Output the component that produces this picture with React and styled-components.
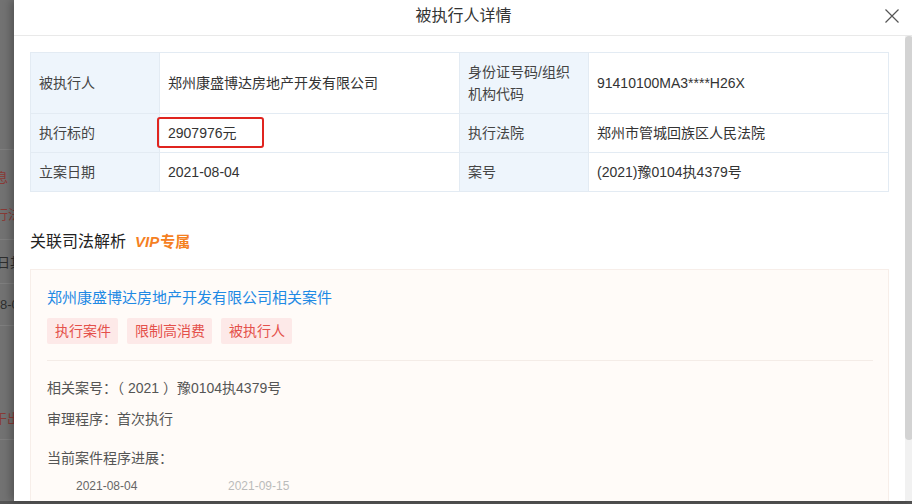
import React from 'react'
import styled, { createGlobalStyle } from 'styled-components'

const GlobalStyle = createGlobalStyle`
  html, body {
    margin: 0;
    padding: 0;
    background: #555;
    font-family: "Liberation Sans", "Noto Sans CJK SC", sans-serif;
  }
  * { box-sizing: border-box; }
`

const Page = styled.div`
  display: flex;
  align-items: flex-start;
  width: 912px;
  height: 504px;
  overflow: hidden;
  background: #555;
`

const Backdrop = styled.div`
  width: 14px;
  height: 501px;
  flex-shrink: 0;
  overflow: hidden;
  background: #727272;
  display: flex;
  flex-direction: column;
`

const BgRow = styled.div`
  height: ${p => p.h}px;
  flex-shrink: 0;
  display: flex;
  align-items: center;
  white-space: nowrap;
  font-size: 13px;
  border-bottom: ${p => (p.line ? '1px solid #7e7e7e' : 'none')};
  color: ${p => (p.red ? '#8a3a36' : '#2e2e2e')};
  span { margin-left: ${p => p.off || 0}px; }
`

const Modal = styled.div`
  flex: 1;
  height: 501px;
  background: #fff;
  display: flex;
  flex-direction: column;
  box-shadow: -3px 0 8px rgba(0, 0, 0, 0.28);
`

const Header = styled.div`
  height: 36px;
  flex-shrink: 0;
  border-bottom: 1px solid #e9e9e9;
  display: grid;
  grid-template-columns: 1fr auto 1fr;
  align-items: center;
`

const Title = styled.div`
  grid-column: 2;
  font-size: 16px;
  color: #333;
  line-height: 22px;
  margin-top: -4px;
`

const Close = styled.button`
  grid-column: 3;
  justify-self: end;
  margin-right: 14px;
  margin-top: -3px;
  width: 14px;
  height: 14px;
  padding: 0;
  border: none;
  background: none;
  display: flex;
`

const Body = styled.div`
  flex: 1;
  display: flex;
  overflow: hidden;
`

const Content = styled.div`
  flex: 1;
  padding: 16px 16px 0 16px;
  overflow: hidden;
`

const Rail = styled.div`
  width: 8px;
  flex-shrink: 0;
  background: #f1f1f1;
  display: flex;
  flex-direction: column;
`

const Thumb = styled.div`
  height: 404px;
  background: #d3d3d3;
  border-radius: 4px;
`

const InfoTable = styled.table`
  width: 100%;
  table-layout: fixed;
  border-collapse: collapse;
  font-size: 14px;
  line-height: 22px;
  color: #333;

  td {
    border: 1px solid #e3ebf3;
    padding: 8px 8px;
    vertical-align: middle;
  }
`

const Label = styled.td`
  background: #eef5fc;
  color: #444;
`

const Marked = styled.span`
  position: relative;
  display: inline-block;

  &::after {
    content: '';
    position: absolute;
    top: -5px;
    bottom: -4px;
    left: -11px;
    right: -27px;
    border: 2px solid #e0241f;
    border-radius: 3px;
  }
`

const SectionHead = styled.div`
  margin-top: 38px;
  display: flex;
  align-items: center;
  gap: 9px;
  line-height: 24px;
`

const SectionTitle = styled.span`
  font-size: 16px;
  color: #222;
`

const Vip = styled.span`
  font-size: 15px;
  font-weight: bold;
  color: #f5801f;
  i { font-style: italic; margin-right: 1px; }
`

const Card = styled.div`
  margin-top: 15px;
  background: #fffbf8;
  border: 1px solid #f7eee9;
  padding: 16px 15px 40px 16px;
`

const CardTitle = styled.a`
  display: block;
  font-size: 15px;
  line-height: 24px;
  color: #1f8ae4;
  text-decoration: none;
`

const Tags = styled.div`
  display: flex;
  gap: 9px;
  margin-top: 8px;
`

const Tag = styled.span`
  height: 26px;
  line-height: 26px;
  padding: 0 7px 0 8px;
  font-size: 14px;
  color: #e4504a;
  background: #fde9e8;
  border-radius: 2px;
`

const Divider = styled.div`
  height: 1px;
  background: #f4ece7;
  margin-top: 16px;
`

const Line = styled.p`
  margin: ${p => p.gap}px 0 0;
  font-size: 14px;
  line-height: 22px;
  color: #555;
`

const Timeline = styled.div`
  display: flex;
  margin-top: 8px;
  padding-left: 29px;
`

const Step = styled.span`
  width: 152px;
  font-size: 12px;
  line-height: 18px;
  color: ${p => (p.done ? '#666' : '#bbb')};
`

const bgRows = [
  { h: 150, line: true },
  { h: 52, text: '息', red: true, off: -5 },
  { h: 22, text: '行法', red: true, off: -5 },
  { h: 16, line: true },
  { h: 44, text: '日其', off: -3, line: true },
  { h: 42, text: '8-04', off: 0, line: true },
  { h: 80 },
  { h: 22, text: '干出', red: true, off: -6 },
  { h: 12, line: true }
]

const rows = [
  ['被执行人', '郑州康盛博达房地产开发有限公司', '身份证号码/组织机构代码', '91410100MA3****H26X'],
  ['执行标的', <Marked>2907976元</Marked>, '执行法院', '郑州市管城回族区人民法院'],
  ['立案日期', '2021-08-04', '案号', '(2021)豫0104执4379号']
]

export default function App() {
  return (
    <>
      <GlobalStyle />
      <Page>
        <Backdrop>
          {bgRows.map((r, i) => (
            <BgRow key={i} h={r.h} line={r.line} red={r.red} off={r.off}>
              {r.text && <span>{r.text}</span>}
            </BgRow>
          ))}
        </Backdrop>
        <Modal>
          <Header>
            <Title>被执行人详情</Title>
            <Close aria-label="关闭">
              <svg width="14" height="14" viewBox="0 0 14 14">
                <path d="M0.5 0.5 L13.5 13.5 M13.5 0.5 L0.5 13.5" stroke="#555" strokeWidth="1.2" fill="none" />
              </svg>
            </Close>
          </Header>
          <Body>
            <Content>
              <InfoTable>
                <colgroup>
                  <col style={{ width: 129 }} />
                  <col style={{ width: 300 }} />
                  <col style={{ width: 129 }} />
                  <col style={{ width: 300 }} />
                </colgroup>
                <tbody>
                  {rows.map((r, i) => (
                    <tr key={i}>
                      <Label>{r[0]}</Label>
                      <td>{r[1]}</td>
                      <Label>{r[2]}</Label>
                      <td>{r[3]}</td>
                    </tr>
                  ))}
                </tbody>
              </InfoTable>

              <SectionHead>
                <SectionTitle>关联司法解析</SectionTitle>
                <Vip><i>VIP</i>专属</Vip>
              </SectionHead>

              <Card>
                <CardTitle href="#">郑州康盛博达房地产开发有限公司相关案件</CardTitle>
                <Tags>
                  <Tag>执行案件</Tag>
                  <Tag>限制高消费</Tag>
                  <Tag>被执行人</Tag>
                </Tags>
                <Divider />
                <Line gap={16}>相关案号：（ 2021 ）豫0104执4379号</Line>
                <Line gap={9}>审理程序：首次执行</Line>
                <Line gap={17}>当前案件程序进展：</Line>
                <Timeline>
                  <Step done>2021-08-04</Step>
                  <Step>2021-09-15</Step>
                </Timeline>
              </Card>
            </Content>
            <Rail>
              <Thumb />
            </Rail>
          </Body>
        </Modal>
      </Page>
    </>
  )
}
